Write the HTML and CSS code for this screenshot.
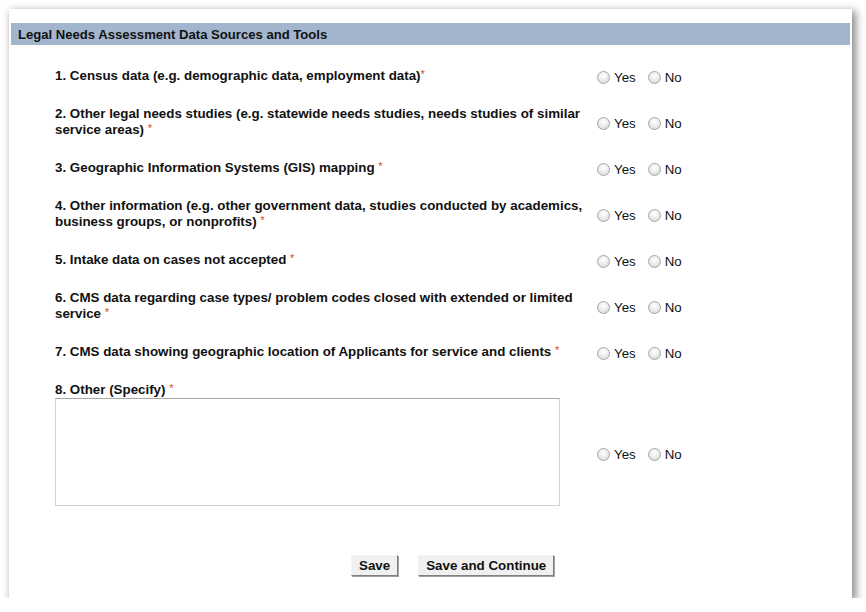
FILE: index.html
```html
<!DOCTYPE html>
<html>
<head>
<meta charset="utf-8">
<link rel="stylesheet" href="styles.css">
</head>
<body>
<div class="panel">
  <div class="header">Legal Needs Assessment Data Sources and Tools</div>
  <div class="questions">
    <div class="qrow">
      <div class="q">1. Census data (e.g. demographic data, employment data)<span class="req">*</span></div>
      <div class="opts"><label class="opt"><span class="radio"></span>Yes</label><label class="opt"><span class="radio"></span>No</label></div>
    </div>
    <div class="qrow">
      <div class="q">2. Other legal needs studies (e.g. statewide needs studies, needs studies of similar service areas) <span class="req">*</span></div>
      <div class="opts"><label class="opt"><span class="radio"></span>Yes</label><label class="opt"><span class="radio"></span>No</label></div>
    </div>
    <div class="qrow">
      <div class="q">3. Geographic Information Systems (GIS) mapping <span class="req">*</span></div>
      <div class="opts"><label class="opt"><span class="radio"></span>Yes</label><label class="opt"><span class="radio"></span>No</label></div>
    </div>
    <div class="qrow">
      <div class="q">4. Other information (e.g. other government data, studies conducted by academics, business groups, or nonprofits) <span class="req">*</span></div>
      <div class="opts"><label class="opt"><span class="radio"></span>Yes</label><label class="opt"><span class="radio"></span>No</label></div>
    </div>
    <div class="qrow">
      <div class="q">5. Intake data on cases not accepted <span class="req">*</span></div>
      <div class="opts"><label class="opt"><span class="radio"></span>Yes</label><label class="opt"><span class="radio"></span>No</label></div>
    </div>
    <div class="qrow">
      <div class="q">6. CMS data regarding case types/ problem codes closed with extended or limited service <span class="req">*</span></div>
      <div class="opts"><label class="opt"><span class="radio"></span>Yes</label><label class="opt"><span class="radio"></span>No</label></div>
    </div>
    <div class="qrow">
      <div class="q">7. CMS data showing geographic location of Applicants for service and clients <span class="req">*</span></div>
      <div class="opts"><label class="opt"><span class="radio"></span>Yes</label><label class="opt"><span class="radio"></span>No</label></div>
    </div>
    <div class="qrow last">
      <div class="q">8. Other (Specify) <span class="req">*</span>
        <div class="ta"></div>
      </div>
      <div class="opts"><label class="opt"><span class="radio"></span>Yes</label><label class="opt"><span class="radio"></span>No</label></div>
    </div>
  </div>
  <div class="buttons">
    <span class="btn">Save</span>
    <span class="btn">Save and Continue</span>
  </div>
</div>
</body>
</html>
```

FILE: styles.css
```css
html, body {
  margin: 0;
  padding: 0;
  background: #ffffff;
}
body {
  padding: 9px 0 0 9px;
  font-family: "Liberation Sans", Arial, sans-serif;
  color: #000;
}
.panel {
  width: 843px;
  height: 589px;
  box-sizing: border-box;
  background: #fff;
  padding: 14px 2px 0 2px;
  box-shadow: 3px 3px 8px 1px rgba(0,0,0,0.45);
}
.header {
  height: 22px;
  background: #a3b5cc;
  font-size: 13.1px;
  font-weight: bold;
  line-height: 23px;
  padding-left: 7px;
  color: #111;
}
.questions {
  padding: 8px 0 0 44px;
}
.qrow {
  display: grid;
  grid-template-columns: 534px auto;
  column-gap: 8px;
  align-items: center;
  height: 46px;
}
.qrow.last {
  height: 156px;
}
.q {
  font-size: 13.35px;
  font-weight: bold;
  line-height: 16px;
  padding: 7px 0;
  color: #111;
}
.req {
  color: #d24a1a;
  font-weight: normal;
  font-size: 11px;
  line-height: 0;
  position: relative;
  top: -2px;
}
.opts {
  display: flex;
  align-items: center;
  font-size: 13.3px;
  line-height: 16px;
  padding-top: 3px;
}
.opt {
  display: flex;
  align-items: center;
  margin-right: 12px;
  color: #111;
}
.radio {
  width: 11px;
  height: 11px;
  border: 1px solid #a6a6a6;
  border-radius: 50%;
  background: radial-gradient(circle at 50% 35%, #ffffff 0%, #f0f0f0 40%, #d2d2d2 100%);
  margin-right: 4px;
  display: inline-block;
}
.ta {
  width: 503px;
  height: 106px;
  border: 1px solid #d0d0d0;
  border-top-color: #a8a8a8;
  margin: 0 0 18px 0;
  background: #fff;
}
.buttons {
  display: flex;
  gap: 20px;
  padding: 24px 0 0 340px;
}
.btn {
  display: inline-block;
  font-size: 13.35px;
  font-weight: bold;
  height: 19px;
  line-height: 19px;
  padding: 0 7px;
  background: #f0f0f0;
  border: 1px solid;
  border-color: #f4f4f4 #808080 #808080 #f4f4f4;
  box-shadow: 1px 1px 0 #a0a0a0;
  color: #111;
}
```
